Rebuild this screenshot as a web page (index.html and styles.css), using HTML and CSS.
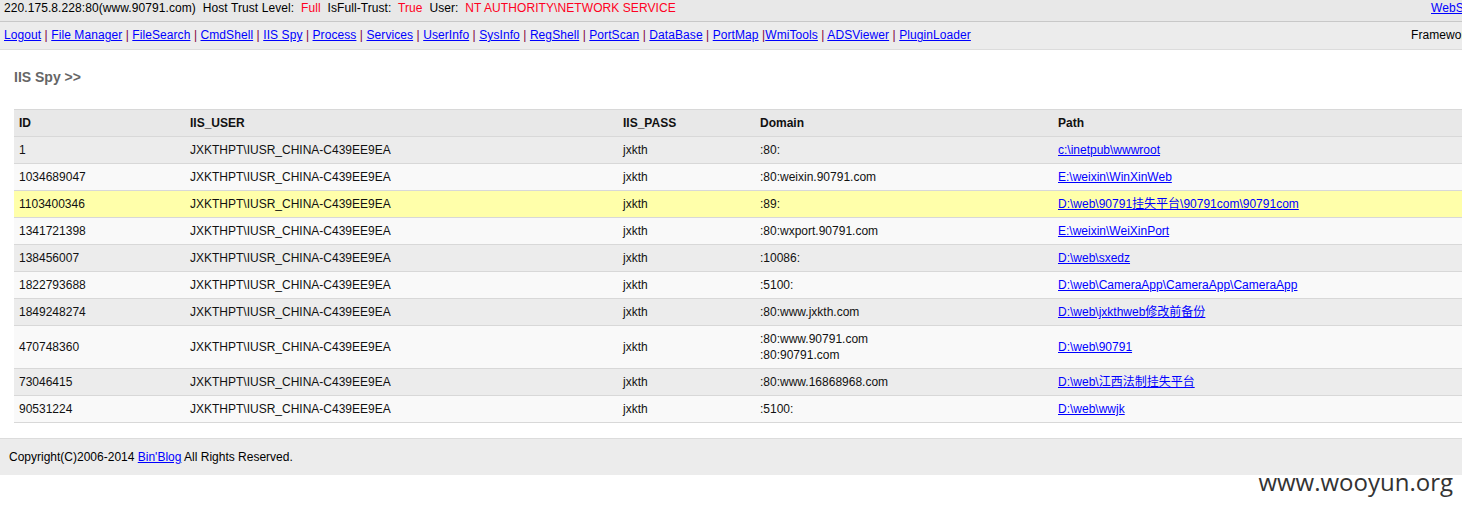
FILE: index.html
```html
<!DOCTYPE html>
<html>
<head>
<meta charset="utf-8">
<title>IIS Spy</title>
<link rel="stylesheet" href="styles.css">
</head>
<body>
<div class="topbar">
  <div class="top-left">220.175.8.228:80(www.90791.com)&nbsp; Host Trust Level:&nbsp; <span class="red">Full</span>&nbsp; IsFull-Trust:&nbsp; <span class="red">True</span>&nbsp; User:&nbsp; <span class="red">NT AUTHORITY\NETWORK SERVICE</span></div>
  <div class="top-right"><a href="#">WebSite Ver: 2014</a></div>
</div>
<div class="navbar">
  <div class="nav-left"><a href="#">Logout</a> <span class="sep">|</span> <a href="#">File Manager</a> <span class="sep">|</span> <a href="#">FileSearch</a> <span class="sep">|</span> <a href="#">CmdShell</a> <span class="sep">|</span> <a href="#">IIS Spy</a> <span class="sep">|</span> <a href="#">Process</a> <span class="sep">|</span> <a href="#">Services</a> <span class="sep">|</span> <a href="#">UserInfo</a> <span class="sep">|</span> <a href="#">SysInfo</a> <span class="sep">|</span> <a href="#">RegShell</a> <span class="sep">|</span> <a href="#">PortScan</a> <span class="sep">|</span> <a href="#">DataBase</a> <span class="sep">|</span> <a href="#">PortMap</a> <span class="sep">|</span><a href="#">WmiTools</a> <span class="sep">|</span> <a href="#">ADSViewer</a> <span class="sep">|</span> <a href="#">PluginLoader</a></div>
  <div class="nav-right">Framework Ver : 2.0.50727.5485</div>
</div>
<div class="main">
  <div class="title">IIS Spy &gt;&gt;</div>
  <table class="spy">
    <colgroup>
      <col class="c-id"><col class="c-user"><col class="c-pass"><col class="c-domain"><col>
    </colgroup>
    <thead>
      <tr><th>ID</th><th>IIS_USER</th><th>IIS_PASS</th><th>Domain</th><th>Path</th></tr>
    </thead>
    <tbody>
      <tr class="alt"><td>1</td><td>JXKTHPT\IUSR_CHINA-C439EE9EA</td><td>jxkth</td><td>:80:</td><td><a href="#">c:\inetpub\wwwroot</a></td></tr>
      <tr><td>1034689047</td><td>JXKTHPT\IUSR_CHINA-C439EE9EA</td><td>jxkth</td><td>:80:weixin.90791.com</td><td><a href="#">E:\weixin\WinXinWeb</a></td></tr>
      <tr class="hl"><td>1103400346</td><td>JXKTHPT\IUSR_CHINA-C439EE9EA</td><td>jxkth</td><td>:89:</td><td><a href="#">D:\web\90791挂失平台\90791com\90791com</a></td></tr>
      <tr><td>1341721398</td><td>JXKTHPT\IUSR_CHINA-C439EE9EA</td><td>jxkth</td><td>:80:wxport.90791.com</td><td><a href="#">E:\weixin\WeiXinPort</a></td></tr>
      <tr class="alt"><td>138456007</td><td>JXKTHPT\IUSR_CHINA-C439EE9EA</td><td>jxkth</td><td>:10086:</td><td><a href="#">D:\web\sxedz</a></td></tr>
      <tr><td>1822793688</td><td>JXKTHPT\IUSR_CHINA-C439EE9EA</td><td>jxkth</td><td>:5100:</td><td><a href="#">D:\web\CameraApp\CameraApp\CameraApp</a></td></tr>
      <tr class="alt"><td>1849248274</td><td>JXKTHPT\IUSR_CHINA-C439EE9EA</td><td>jxkth</td><td>:80:www.jxkth.com</td><td><a href="#">D:\web\jxkthweb修改前备份</a></td></tr>
      <tr><td>470748360</td><td>JXKTHPT\IUSR_CHINA-C439EE9EA</td><td>jxkth</td><td>:80:www.90791.com<br>:80:90791.com</td><td><a href="#">D:\web\90791</a></td></tr>
      <tr class="alt"><td>73046415</td><td>JXKTHPT\IUSR_CHINA-C439EE9EA</td><td>jxkth</td><td>:80:www.16868968.com</td><td><a href="#">D:\web\江西法制挂失平台</a></td></tr>
      <tr><td>90531224</td><td>JXKTHPT\IUSR_CHINA-C439EE9EA</td><td>jxkth</td><td>:5100:</td><td><a href="#">D:\web\wwjk</a></td></tr>
    </tbody>
  </table>
</div>
<div class="footer">Copyright(C)2006-2014 <a href="#">Bin'Blog</a> All Rights Reserved.</div>
<div class="watermark">www.wooyun.org</div>
</body>
</html>
```
FILE: styles.css
```css
html, body {
  margin: 0;
  padding: 0;
  overflow: hidden;
}
body {
  font-family: "Liberation Sans", Arial, "Noto Sans CJK SC", sans-serif;
  font-size: 12px;
  color: #000;
  background: #fff;
  position: relative;
  min-height: 511px;
}
a {
  color: #0000ff;
  text-decoration: underline;
}
.topbar {
  display: flex;
  height: 21px;
  line-height: 17px;
  background: #e8e8e8;
  border-bottom: 1px solid #c8c8c8;
  padding: 0 0 0 4px;
  white-space: nowrap;
  overflow: hidden;
  letter-spacing: 0.08px;
}
.top-left {
  flex: 0 0 1427px;
}
.top-right {
  flex: 0 0 auto;
}
.red {
  color: #ff0022;
}
.navbar {
  display: flex;
  height: 27px;
  line-height: 27px;
  background: #ececec;
  border-bottom: 1px solid #dcdcdc;
  padding: 0 0 0 4px;
  white-space: nowrap;
  overflow: hidden;
  letter-spacing: 0.08px;
}
.nav-left {
  flex: 0 0 1407px;
}
.nav-right {
  flex: 0 0 auto;
}
.sep {
  color: #800040;
}
.main {
  padding: 19px 0 15px 14px;
}
.title {
  font-size: 14px;
  font-weight: bold;
  color: #666;
  line-height: 16px;
  margin-bottom: 24px;
}
.spy {
  border-collapse: collapse;
  table-layout: fixed;
  width: 1500px;
  border-top: 1px solid #d8d8d8;
}
.c-id { width: 171px; }
.c-user { width: 433px; }
.c-pass { width: 137px; }
.c-domain { width: 298px; }
.spy th, .spy td {
  text-align: left;
  padding: 5px 5px;
  line-height: 16px;
  border-bottom: 1px solid #d8d8d8;
  white-space: nowrap;
  vertical-align: middle;
}
.spy th {
  background: #e8e8e8;
  font-weight: bold;
  color: #111;
}
.spy td {
  color: #111;
}
.spy tbody tr {
  background: #f9f9f9;
}
.spy tbody tr.alt {
  background: #ececec;
}
.spy tbody tr.hl {
  background: #ffffaa;
}
.footer {
  background: #ececec;
  border-top: 1px solid #dcdcdc;
  height: 36px;
  line-height: 36px;
  padding-left: 9px;
}
.watermark {
  position: absolute;
  right: 9px;
  top: 466px;
  font-family: "Open Sans", "Noto Sans", sans-serif;
  font-size: 24px;
  color: #333;
  line-height: 32px;
}
```
